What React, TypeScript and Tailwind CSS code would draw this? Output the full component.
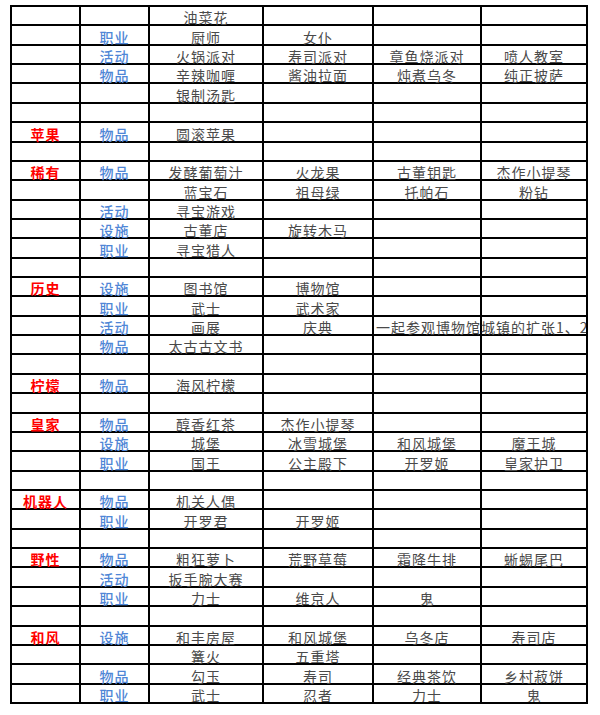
const rows: string[][] = [
  ["", "", "油菜花", "", "", ""],
  ["", "职业", "厨师", "女仆", "", ""],
  ["", "活动", "火锅派对", "寿司派对", "章鱼烧派对", "喷人教室"],
  ["", "物品", "辛辣咖喱", "酱油拉面", "炖煮乌冬", "纯正披萨"],
  ["", "", "银制汤匙", "", "", ""],
  [],
  ["苹果", "物品", "圆滚苹果"],
  [],
  ["稀有", "物品", "发酵葡萄汁", "火龙果", "古董钥匙", "杰作小提琴"],
  ["", "", "蓝宝石", "祖母绿", "托帕石", "粉钻"],
  ["", "活动", "寻宝游戏"],
  ["", "设施", "古董店", "旋转木马"],
  ["", "职业", "寻宝猎人"],
  [],
  ["历史", "设施", "图书馆", "博物馆"],
  ["", "职业", "武士", "武术家"],
  ["", "活动", "画展", "庆典", "一起参观博物馆城镇的扩张1、2"],
  ["", "物品", "太古古文书"],
  [],
  ["柠檬", "物品", "海风柠檬"],
  [],
  ["皇家", "物品", "醇香红茶", "杰作小提琴"],
  ["", "设施", "城堡", "冰雪城堡", "和风城堡", "魔王城"],
  ["", "职业", "国王", "公主殿下", "开罗姬", "皇家护卫"],
  [],
  ["机器人", "物品", "机关人偶"],
  ["", "职业", "开罗君", "开罗姬"],
  [],
  ["野性", "物品", "粗狂萝卜", "荒野草莓", "霜降牛排", "蜥蜴尾巴"],
  ["", "活动", "扳手腕大赛"],
  ["", "职业", "力士", "维京人", "鬼"],
  [],
  ["和风", "设施", "和丰房屋", "和风城堡", "乌冬店", "寿司店"],
  ["", "", "篝火", "五重塔"],
  ["", "物品", "勾玉", "寿司", "经典茶饮", "乡村菽饼"],
  ["", "职业", "武士", "忍者", "力士", "鬼"],
];

function Cell({ text, col }: { text: string; col: number }) {
  // long text spills into the next column like a spreadsheet
  if (text.length > 8) {
    return (
      <div className="relative z-10 bg-white flex items-end whitespace-nowrap pl-[2px] text-[14px] leading-[14px] tracking-[1px] text-[#4a4a4a]">
        {text}
      </div>
    );
  }
  let color = "text-[#4a4a4a]";
  if (col === 0) color = "text-[#ff0000] font-bold";
  if (col === 1) color = "text-[#4f86d6] font-medium";
  return (
    <div className={`bg-white flex items-end justify-center whitespace-nowrap text-[14px] leading-[14px] tracking-[1px] ${color}`}>
      {text}
    </div>
  );
}

export default function App() {
  return (
    <div className="min-h-[715px] bg-white pl-[10px] pt-[5px] font-['Noto_Sans_CJK_SC',sans-serif]">
      <div className="w-fit overflow-hidden border-2 border-black bg-black grid grid-cols-[67px_67px_112px_108px_106px_104px] auto-rows-[17.36px] gap-[2px]">
        {rows.map((row, r) =>
          [0, 1, 2, 3, 4, 5].map((c) => <Cell key={`${r}-${c}`} text={row[c] ?? ""} col={c} />)
        )}
      </div>
    </div>
  );
}
